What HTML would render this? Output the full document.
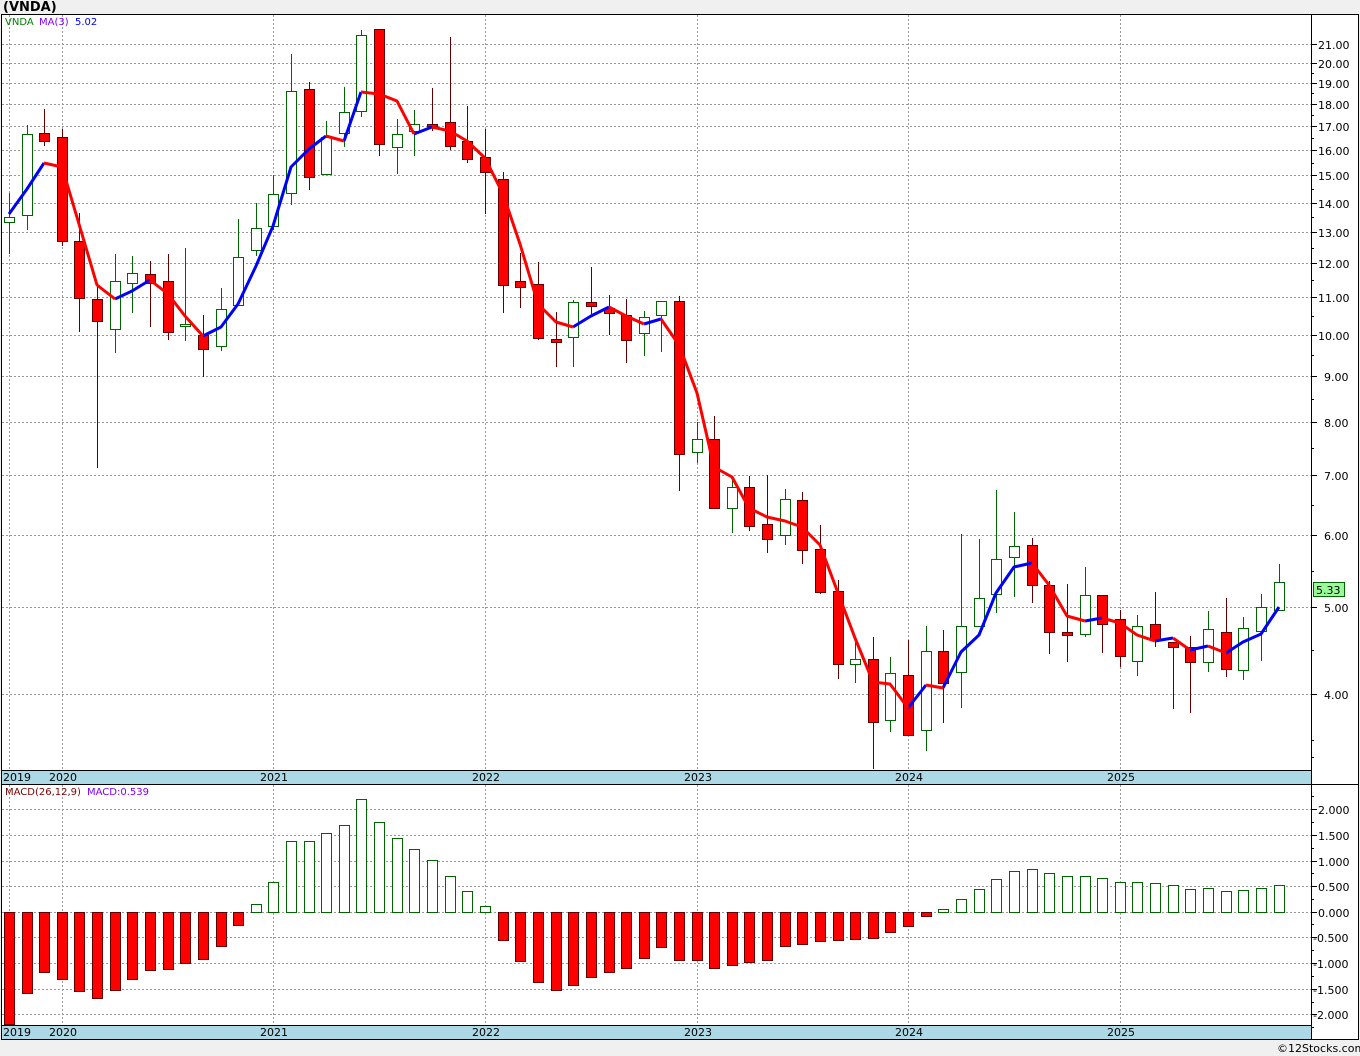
<!DOCTYPE html>
<html><head><meta charset="utf-8"><style>
html,body{margin:0;padding:0;background:#f0f0f0;width:1360px;height:1056px;overflow:hidden}
svg{display:block}
text{font-family:"DejaVu Sans","Liberation Sans",sans-serif;font-size:11px;fill:#000}
</style></head><body>
<svg width="1360" height="1056" viewBox="0 0 1360 1056">
<rect x="0" y="0" width="1360" height="1056" fill="#f0f0f0"/>
<text x="3" y="11" style="font-weight:bold;font-size:13px">(VNDA)</text>
<rect x="1.5" y="14.5" width="1357" height="1025" fill="#fff" stroke="#000"/>
<!-- axis bands -->
<rect x="1.5" y="770.5" width="1310" height="14" fill="#add8e6" stroke="#000"/>
<rect x="1.5" y="1025.5" width="1310" height="14" fill="#add8e6" stroke="#000"/>
<line x1="1311.5" y1="14" x2="1311.5" y2="1040" stroke="#000"/>
<line x1="1311" y1="784.5" x2="1359" y2="784.5" stroke="#000"/>
<!-- grid -->
<g stroke="#999" stroke-dasharray="2,2" stroke-width="1">
<path d="M2,44.5H1311M2,63.5H1311M2,83.5H1311M2,104.5H1311M2,126.5H1311M2,150.5H1311M2,175.5H1311M2,203.5H1311M2,232.5H1311M2,263.5H1311M2,297.5H1311M2,335.5H1311M2,376.5H1311M2,422.5H1311M2,475.5H1311M2,535.5H1311M2,607.5H1311M2,694.5H1311"/>
<path d="M9.5,15V770M62.5,15V770M273.5,15V770M485.5,15V770M697.5,15V770M908.5,15V770M1120.5,15V770"/>
<path d="M2,809.5H1311M2,835.5H1311M2,861.5H1311M2,886.5H1311M2,912.5H1311M2,937.5H1311M2,963.5H1311M2,989.5H1311M2,1014.5H1311"/>
<path d="M9.5,785V1025M62.5,785V1025M273.5,785V1025M485.5,785V1025M697.5,785V1025M908.5,785V1025M1120.5,785V1025"/>
</g>
<!-- right axis ticks -->
<g stroke="#000">
<path d="M1311,44.5h6M1311,63.5h6M1311,83.5h6M1311,104.5h6M1311,126.5h6M1311,150.5h6M1311,175.5h6M1311,203.5h6M1311,232.5h6M1311,263.5h6M1311,297.5h6M1311,335.5h6M1311,376.5h6M1311,422.5h6M1311,475.5h6M1311,535.5h6M1311,607.5h6M1311,694.5h6"/>
<path d="M1311,73.5h3M1311,93.5h3M1311,115.5h3M1311,138.5h3M1311,163.5h3M1311,189.5h3M1311,217.5h3M1311,248.5h3M1311,280.5h3M1311,316.5h3M1311,355.5h3M1311,399.5h3M1311,448.5h3M1311,505.5h3M1311,571.5h3M1311,650.5h3M1311,740.5h3M1311,757.5h3"/>
<path d="M1311,809.5h6M1311,835.5h6M1311,861.5h6M1311,886.5h6M1311,912.5h6M1311,937.5h6M1311,963.5h6M1311,989.5h6M1311,1014.5h6"/>
<path d="M1311,796.5h3M1311,822.5h3M1311,848.5h3M1311,873.5h3M1311,899.5h3M1311,924.5h3M1311,950.5h3M1311,976.5h3M1311,1002.5h3M1311,1027.5h3"/>
</g>
<g>
<text x="1318" y="49">21.00</text><text x="1318" y="68">20.00</text><text x="1318" y="88">19.00</text><text x="1318" y="109">18.00</text><text x="1318" y="131">17.00</text><text x="1318" y="155">16.00</text><text x="1318" y="180">15.00</text><text x="1318" y="208">14.00</text><text x="1318" y="237">13.00</text><text x="1318" y="268">12.00</text><text x="1318" y="302">11.00</text><text x="1318" y="340">10.00</text><text x="1324" y="381">9.00</text><text x="1324" y="427">8.00</text><text x="1324" y="480">7.00</text><text x="1324" y="540">6.00</text><text x="1324" y="612">5.00</text><text x="1324" y="699">4.00</text>
<text x="1318" y="814">2.000</text><text x="1318" y="840">1.500</text><text x="1318" y="866">1.000</text><text x="1318" y="891">0.500</text><text x="1318" y="917">0.000</text><text x="1313" y="942">-0.500</text><text x="1313" y="968">-1.000</text><text x="1313" y="994">-1.500</text><text x="1313" y="1019">-2.000</text>
</g>
<rect x="1313.5" y="582.5" width="31" height="14" fill="#98fb98" stroke="#006400"/>
<text x="1316" y="594">5.33</text>
<!-- year labels -->
<g>
<text x="3" y="781">2019</text><text x="49" y="781">2020</text><text x="260" y="781">2021</text><text x="472" y="781">2022</text><text x="684" y="781">2023</text><text x="895" y="781">2024</text><text x="1107" y="781">2025</text>
<text x="3" y="1036">2019</text><text x="49" y="1036">2020</text><text x="260" y="1036">2021</text><text x="472" y="1036">2022</text><text x="684" y="1036">2023</text><text x="895" y="1036">2024</text><text x="1107" y="1036">2025</text>
</g>
<text x="5" y="25" style="font-size:10px;fill:#008000">VNDA</text>
<text x="39" y="25" style="font-size:10px;fill:#8000ff">MA(3)</text>
<text x="75" y="25" style="font-size:10px;fill:#0000ff">5.02</text>
<text x="5" y="795" style="font-size:10px;fill:#800000">MACD(26,12,9)</text>
<text x="87" y="795" style="font-size:10px;fill:#8000ff">MACD:0.539</text>
<text x="1277" y="1052" style="font-size:11px">©12Stocks.com</text>

<!-- green candles -->
<g stroke="#006400" stroke-width="1" fill="#fff">
<path d="M9.5,193V254M27.5,125V230M115.5,254V353M132.5,256V313M185.5,248V341M221.5,288V351M238.5,219V305M256.5,203V256M273.5,175V230M291.5,54V205M326.5,121V175M344.5,87V147M361.5,30V117M397.5,119V174M414.5,110V156M573.5,300V367M644.5,311V356M661.5,301V352M697.5,422V463M732.5,480V533M785.5,489V545M855.5,638V683M890.5,657V732M926.5,626V751M961.5,534V708M979.5,539V626M996.5,490V613M1014.5,512V597M1085.5,567V637M1137.5,615V676M1208.5,611V672M1243.5,617V680M1261.5,594V661M1279.5,564V610"/>
<rect x="4.5" y="217.5" width="10" height="5"/><rect x="22.5" y="134.5" width="10" height="81"/><rect x="110.5" y="281.5" width="10" height="48"/><rect x="127.5" y="273.5" width="10" height="10"/><rect x="180.5" y="324.5" width="10" height="2"/><rect x="216.5" y="309.5" width="10" height="37"/><rect x="233.5" y="257.5" width="10" height="48"/><rect x="251.5" y="228.5" width="10" height="22"/><rect x="268.5" y="194.5" width="10" height="32"/><rect x="286.5" y="91.5" width="10" height="102"/><rect x="321.5" y="137.5" width="10" height="37"/><rect x="339.5" y="112.5" width="10" height="21"/><rect x="356.5" y="35.5" width="10" height="76"/><rect x="392.5" y="134.5" width="10" height="13"/><rect x="409.5" y="124.5" width="10" height="7"/><rect x="568.5" y="302.5" width="10" height="35"/><rect x="639.5" y="317.5" width="10" height="16"/><rect x="656.5" y="301.5" width="10" height="14"/><rect x="692.5" y="439.5" width="10" height="13"/><rect x="727.5" y="487.5" width="10" height="21"/><rect x="780.5" y="499.5" width="10" height="36"/><rect x="850.5" y="659.5" width="10" height="5"/><rect x="885.5" y="673.5" width="10" height="47"/><rect x="921.5" y="651.5" width="10" height="79"/><rect x="956.5" y="626.5" width="10" height="46"/><rect x="974.5" y="598.5" width="10" height="28"/><rect x="991.5" y="559.5" width="10" height="35"/><rect x="1009.5" y="546.5" width="10" height="11"/><rect x="1080.5" y="595.5" width="10" height="39"/><rect x="1132.5" y="626.5" width="10" height="35"/><rect x="1203.5" y="629.5" width="10" height="33"/><rect x="1238.5" y="628.5" width="10" height="42"/><rect x="1256.5" y="607.5" width="10" height="24"/><rect x="1274.5" y="582.5" width="10" height="28"/>
</g>
<!-- red candles -->
<g stroke="#600000" stroke-width="1" fill="#ff0000">
<path d="M44.5,109V146M62.5,129V246M79.5,213V332M97.5,286V468M150.5,261V327M168.5,254V340M203.5,315V377M309.5,82V190M379.5,29V156M432.5,88V131M450.5,37V150M467.5,106V163M485.5,129V214M503.5,172V313M520.5,253V308M538.5,262V340M556.5,312V367M591.5,267V314M609.5,295V335M626.5,299V363M679.5,296V491M714.5,416V509M749.5,476V531M767.5,475V553M802.5,492V564M820.5,525V594M838.5,580V679M873.5,637V769M908.5,640V736M943.5,630V723M1032.5,538V603M1049.5,581V654M1067.5,584V662M1102.5,595V653M1120.5,610V667M1155.5,592V647M1173.5,642V709M1190.5,636V713M1226.5,598V677"/>
<rect x="39.5" y="133.5" width="10" height="8"/><rect x="57.5" y="137.5" width="10" height="104"/><rect x="74.5" y="241.5" width="10" height="57"/><rect x="92.5" y="299.5" width="10" height="22"/><rect x="145.5" y="274.5" width="10" height="9"/><rect x="163.5" y="281.5" width="10" height="51"/><rect x="198.5" y="335.5" width="10" height="14"/><rect x="304.5" y="89.5" width="10" height="88"/><rect x="374.5" y="29.5" width="10" height="115"/><rect x="427.5" y="124.5" width="10" height="2"/><rect x="445.5" y="122.5" width="10" height="24"/><rect x="462.5" y="141.5" width="10" height="18"/><rect x="480.5" y="157.5" width="10" height="15"/><rect x="498.5" y="179.5" width="10" height="106"/><rect x="515.5" y="281.5" width="10" height="6"/><rect x="533.5" y="284.5" width="10" height="54"/><rect x="551.5" y="339.5" width="10" height="3"/><rect x="586.5" y="302.5" width="10" height="4"/><rect x="604.5" y="308.5" width="10" height="5"/><rect x="621.5" y="315.5" width="10" height="25"/><rect x="674.5" y="301.5" width="10" height="153"/><rect x="709.5" y="439.5" width="10" height="69"/><rect x="744.5" y="487.5" width="10" height="39"/><rect x="762.5" y="524.5" width="10" height="15"/><rect x="797.5" y="500.5" width="10" height="50"/><rect x="815.5" y="549.5" width="10" height="43"/><rect x="833.5" y="591.5" width="10" height="73"/><rect x="868.5" y="659.5" width="10" height="63"/><rect x="903.5" y="675.5" width="10" height="60"/><rect x="938.5" y="651.5" width="10" height="32"/><rect x="1027.5" y="545.5" width="10" height="40"/><rect x="1044.5" y="585.5" width="10" height="47"/><rect x="1062.5" y="632.5" width="10" height="3"/><rect x="1097.5" y="595.5" width="10" height="29"/><rect x="1115.5" y="619.5" width="10" height="37"/><rect x="1150.5" y="624.5" width="10" height="16"/><rect x="1168.5" y="642.5" width="10" height="5"/><rect x="1185.5" y="647.5" width="10" height="15"/><rect x="1221.5" y="632.5" width="10" height="37"/>
</g>
<!-- MA -->
<g fill="none" stroke-width="3" stroke-linejoin="round">
<path stroke="#0000ff" d="M9,214L27,189L44,163M115,299L132,291L150,280M203,336L221,327L238,304L256,266L273,226L291,167L309,149L326,136M344,141L361,92M414,134L432,127M573,327L591,316L609,307M644,324L661,319M908,708L926,685M943,688L961,652L979,635L996,593L1014,567L1032,563M1085,621L1102,618M1155,641L1173,638M1190,650L1208,646M1226,653L1243,642L1261,634L1279,607"/>
<path stroke="#ff0000" d="M44,163L62,167L79,224L97,285L115,299M150,280L168,294L185,316L203,336M326,136L344,141M361,92L379,94L397,101L414,134M432,127L450,131L467,141L485,158L503,194L520,244L538,304L556,322L573,327M609,307L626,316L644,324M661,319L679,345L697,393L714,467L732,477L749,508L767,517L785,521L802,527L820,545L838,593L855,638L873,682L890,684L908,708M926,685L943,688M1032,563L1049,585L1067,616L1085,621M1102,618L1120,623L1137,635L1155,641M1173,638L1190,650M1208,646L1226,653"/>
</g>
<!-- MACD red -->
<g fill="#ff0000" stroke="#600000">
<rect x="4.5" y="912.5" width="10" height="112"/><rect x="22.5" y="912.5" width="10" height="81"/><rect x="39.5" y="912.5" width="10" height="60"/><rect x="57.5" y="912.5" width="10" height="67"/><rect x="74.5" y="912.5" width="10" height="79"/><rect x="92.5" y="912.5" width="10" height="86"/><rect x="110.5" y="912.5" width="10" height="78"/><rect x="127.5" y="912.5" width="10" height="67"/><rect x="145.5" y="912.5" width="10" height="58"/><rect x="163.5" y="912.5" width="10" height="57"/><rect x="180.5" y="912.5" width="10" height="51"/><rect x="198.5" y="912.5" width="10" height="47"/><rect x="216.5" y="912.5" width="10" height="34"/><rect x="233.5" y="912.5" width="10" height="13"/>
<rect x="498.5" y="912.5" width="10" height="28"/><rect x="515.5" y="912.5" width="10" height="49"/><rect x="533.5" y="912.5" width="10" height="70"/><rect x="551.5" y="912.5" width="10" height="78"/><rect x="568.5" y="912.5" width="10" height="73"/><rect x="586.5" y="912.5" width="10" height="65"/><rect x="604.5" y="912.5" width="10" height="60"/><rect x="621.5" y="912.5" width="10" height="56"/><rect x="639.5" y="912.5" width="10" height="46"/><rect x="656.5" y="912.5" width="10" height="35"/><rect x="674.5" y="912.5" width="10" height="48"/><rect x="692.5" y="912.5" width="10" height="48"/><rect x="709.5" y="912.5" width="10" height="56"/><rect x="727.5" y="912.5" width="10" height="53"/><rect x="744.5" y="912.5" width="10" height="50"/><rect x="762.5" y="912.5" width="10" height="48"/><rect x="780.5" y="912.5" width="10" height="34"/><rect x="797.5" y="912.5" width="10" height="32"/><rect x="815.5" y="912.5" width="10" height="29"/><rect x="833.5" y="912.5" width="10" height="28"/><rect x="850.5" y="912.5" width="10" height="27"/><rect x="868.5" y="912.5" width="10" height="26"/><rect x="885.5" y="912.5" width="10" height="20"/><rect x="903.5" y="912.5" width="10" height="14"/><rect x="921.5" y="912.5" width="10" height="4"/>
</g>
<!-- MACD green -->
<g fill="#fff" stroke="#006400">
<rect x="251.5" y="904.5" width="10" height="8"/><rect x="268.5" y="882.5" width="10" height="30"/><rect x="286.5" y="841.5" width="10" height="71"/><rect x="304.5" y="841.5" width="10" height="71"/><rect x="321.5" y="833.5" width="10" height="79"/><rect x="339.5" y="825.5" width="10" height="87"/><rect x="356.5" y="799.5" width="10" height="113"/><rect x="374.5" y="822.5" width="10" height="90"/><rect x="392.5" y="838.5" width="10" height="74"/><rect x="409.5" y="849.5" width="10" height="63"/><rect x="427.5" y="860.5" width="10" height="52"/><rect x="445.5" y="876.5" width="10" height="36"/><rect x="462.5" y="891.5" width="10" height="21"/><rect x="480.5" y="906.5" width="10" height="6"/>
<rect x="938.5" y="909.5" width="10" height="3"/><rect x="956.5" y="899.5" width="10" height="13"/><rect x="974.5" y="889.5" width="10" height="23"/><rect x="991.5" y="879.5" width="10" height="33"/><rect x="1009.5" y="871.5" width="10" height="41"/><rect x="1027.5" y="869.5" width="10" height="43"/><rect x="1044.5" y="873.5" width="10" height="39"/><rect x="1062.5" y="876.5" width="10" height="36"/><rect x="1080.5" y="876.5" width="10" height="36"/><rect x="1097.5" y="878.5" width="10" height="34"/><rect x="1115.5" y="882.5" width="10" height="30"/><rect x="1132.5" y="882.5" width="10" height="30"/><rect x="1150.5" y="883.5" width="10" height="29"/><rect x="1168.5" y="885.5" width="10" height="27"/><rect x="1185.5" y="889.5" width="10" height="23"/><rect x="1203.5" y="888.5" width="10" height="24"/><rect x="1221.5" y="891.5" width="10" height="21"/><rect x="1238.5" y="890.5" width="10" height="22"/><rect x="1256.5" y="888.5" width="10" height="24"/><rect x="1274.5" y="885.5" width="10" height="27"/>
</g>
</svg>
</body></html>
